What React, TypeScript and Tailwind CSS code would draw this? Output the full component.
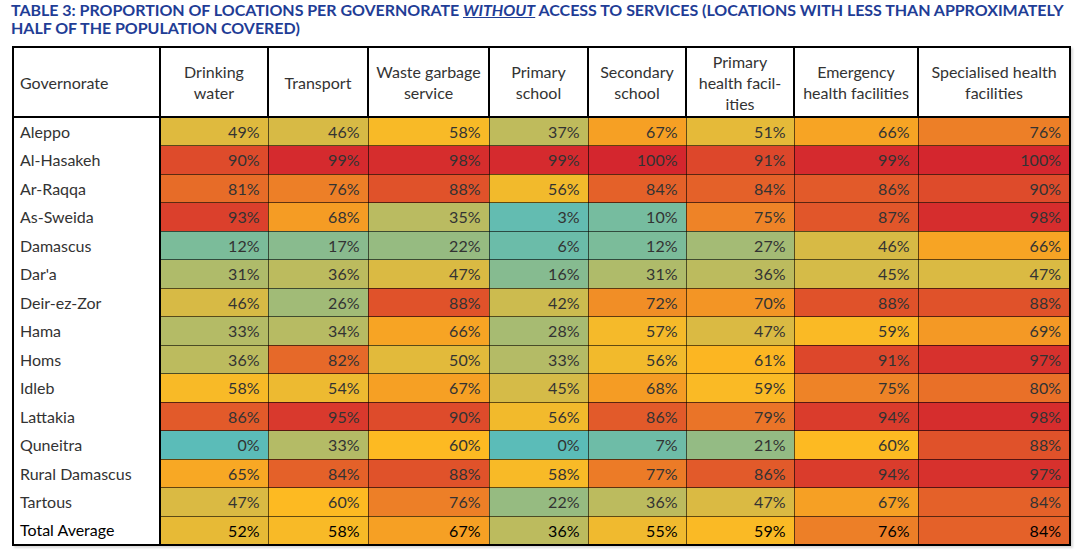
const columns = [
  { key: 'water', label: ['Drinking', 'water'], width: 'w-[108px]' },
  { key: 'transport', label: ['Transport'], width: 'w-[100px]' },
  { key: 'waste', label: ['Waste garbage', 'service'], width: 'w-[121px]' },
  { key: 'primary', label: ['Primary', 'school'], width: 'w-[99px]' },
  { key: 'secondary', label: ['Secondary', 'school'], width: 'w-[98px]' },
  { key: 'phc', label: ['Primary', 'health facil-', 'ities'], width: 'w-[108px]' },
  { key: 'emergency', label: ['Emergency', 'health facilities'], width: 'w-[124px]' },
  { key: 'specialised', label: ['Specialised health', 'facilities'], width: 'w-[152px]' },
];

const rows: { name: string; values: number[] }[] = [
  { name: 'Aleppo', values: [49, 46, 58, 37, 67, 51, 66, 76] },
  { name: 'Al-Hasakeh', values: [90, 99, 98, 99, 100, 91, 99, 100] },
  { name: 'Ar-Raqqa', values: [81, 76, 88, 56, 84, 84, 86, 90] },
  { name: 'As-Sweida', values: [93, 68, 35, 3, 10, 75, 87, 98] },
  { name: 'Damascus', values: [12, 17, 22, 6, 12, 27, 46, 66] },
  { name: "Dar'a", values: [31, 36, 47, 16, 31, 36, 45, 47] },
  { name: 'Deir-ez-Zor', values: [46, 26, 88, 42, 72, 70, 88, 88] },
  { name: 'Hama', values: [33, 34, 66, 28, 57, 47, 59, 69] },
  { name: 'Homs', values: [36, 82, 50, 33, 56, 61, 91, 97] },
  { name: 'Idleb', values: [58, 54, 67, 45, 68, 59, 75, 80] },
  { name: 'Lattakia', values: [86, 95, 90, 56, 86, 79, 94, 98] },
  { name: 'Quneitra', values: [0, 33, 60, 0, 7, 21, 60, 88] },
  { name: 'Rural Damascus', values: [65, 84, 88, 58, 77, 86, 94, 97] },
  { name: 'Tartous', values: [47, 60, 76, 22, 36, 47, 67, 84] },
];

const total = { name: 'Total Average', values: [52, 58, 67, 36, 55, 59, 76, 84] };

// 3-colour scale: teal (0) -> yellow (60) -> red (100)
const low = [91, 188, 184];
const mid = [253, 186, 34];
const high = [212, 38, 46];

const heat = (v: number) => {
  const [a, b, t] = v <= 60 ? [low, mid, v / 60] : [mid, high, (v - 60) / 40];
  const c = a.map((x, i) => Math.round(x + (b[i] - x) * t));
  return `rgb(${c[0]}, ${c[1]}, ${c[2]})`;
};

const DataRow = ({ name, values, last }: { name: string; values: number[]; last?: boolean }) => (
  <tr className="h-[28.5px]">
    <td className={`pl-1.5 border-l-2 border-r-2 border-black bg-white ${last ? 'border-b-2 text-black' : 'text-[#333]'}`}>
      {name}
    </td>
    {values.map((v, i) => (
      <td
        key={i}
        className={`pr-2 text-right border border-black/60 ${last ? 'text-black border-b-2 border-b-black' : 'text-[#333]'} ${
          i === values.length - 1 ? 'border-r-2 border-r-black' : ''
        }`}
        style={{ backgroundColor: heat(v) }}
      >
        {v}%
      </td>
    ))}
  </tr>
);

const App = () => {
  return (
    <div className="w-[1080px] h-[557px] bg-white overflow-hidden font-['Lato',sans-serif]">
      <h1 className="pl-[11px] pt-[1px] text-[16px] leading-[18px] font-bold text-[#1f3d96] whitespace-nowrap tracking-[-0.03px]">
        TABLE 3: PROPORTION OF LOCATIONS PER GOVERNORATE <span className="italic underline">WITHOUT</span> ACCESS TO SERVICES (LOCATIONS WITH LESS THAN APPROXIMATELY
        <br />
        HALF OF THE POPULATION COVERED)
      </h1>
      <div className="pl-[12px] pt-[9px]">
        <table className="table-fixed border-collapse text-[16px] leading-[21px] shadow-[2px_2px_2px_rgba(0,0,0,0.15)]">
          <colgroup>
            <col className="w-[147px]" />
            {columns.map((c) => (
              <col key={c.key} className={c.width} />
            ))}
          </colgroup>
          <thead>
            <tr className="h-[70px] bg-white text-[#333]">
              <th className="border-2 border-black pl-1.5 text-left font-normal">Governorate</th>
              {columns.map((c) => (
                <th key={c.key} className="border-2 border-black px-1 text-center font-normal">
                  {c.label.map((l, i) => (
                    <div key={i}>{l}</div>
                  ))}
                </th>
              ))}
            </tr>
          </thead>
          <tbody>
            {rows.map((r) => (
              <DataRow key={r.name} name={r.name} values={r.values} />
            ))}
            <DataRow name={total.name} values={total.values} last />
          </tbody>
        </table>
      </div>
    </div>
  );
};

export default App;
